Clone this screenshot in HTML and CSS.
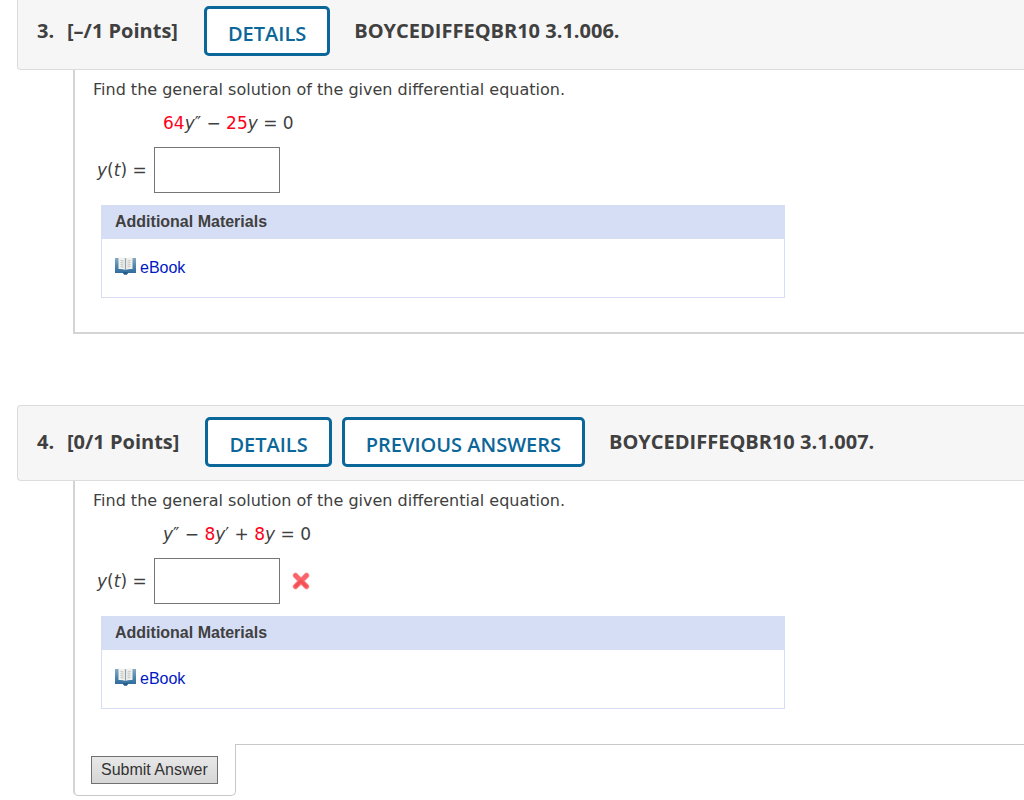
FILE: index.html
```html
<!DOCTYPE html>
<html lang="en">
<head>
  <meta charset="UTF-8">
  <meta name="viewport" content="width=device-width, initial-scale=1.0">
  <title>Assignment</title>
  <link rel="stylesheet" href="styles.css">
</head>
<body>
  <!-- shared icons -->
  <svg width="0" height="0" class="sprite" aria-hidden="true">
    <defs>
      <linearGradient id="cover" x1="0" y1="0" x2="0" y2="1">
        <stop offset="0" stop-color="#86abc6"/>
        <stop offset=".5" stop-color="#4d86b0"/>
        <stop offset="1" stop-color="#2a6698"/>
      </linearGradient>
    </defs>
    <symbol id="book" viewBox="0 0 21 18">
      <path d="M0 1h21v15h-8l-1 1.500h-3L8 16H0z" fill="url(#cover)"/>
      <path d="M3.500 .500Q7 0 10.500 1.500 14 0 17.500 .500V12q-4-.500-7 1Q7 11.500 3.500 12z" fill="#f1f1ee"/>
      <path d="M10.500 1.500v11.500" stroke="#8ea3b1" stroke-width="1.200"/>
      <path d="M5.500 3.500l3 .500M5.500 5.500l3 .500M5.500 7.500l3 .500M5.500 9.500l3 .500M12.500 4l3-.500M12.500 6l3-.500M12.500 8l3-.500M12.500 10l3-.500" stroke="#c2c2be" stroke-width="1"/>
      <path d="M8 15h5l-1 2.500H9z" fill="#245b88"/>
    </symbol>
    <symbol id="wrong" viewBox="0 0 18 18">
      <path d="M3.500 3.500l11 11M14.500 3.500l-11 11" stroke="#f9a0a0" stroke-width="5.500" stroke-linecap="round"/>
      <path d="M3.500 3.500l11 11M14.500 3.500l-11 11" stroke="#fa6569" stroke-width="4.500" stroke-linecap="round"/>
      <path d="M9 9l5 5M9 9l-5 5" stroke="#f64e53" stroke-width="3" stroke-linecap="round"/>
    </symbol>
  </svg>

  <main class="assignment">
    <section class="question">
      <header class="question-header">
        <span class="number">3.</span>
        <span class="points">[–/1 Points]</span>
        <div class="actions">
          <button type="button" class="btn">DETAILS</button>
        </div>
        <span class="source">BOYCEDIFFEQBR10 3.1.006.</span>
      </header>
      <div class="question-body closed">
        <p class="prompt">Find the general solution of the given differential equation.</p>
        <p class="equation"><span class="rand">64</span><i>y</i>″ − <span class="rand">25</span><i>y</i> = 0</p>
        <div class="answer">
          <label for="answer3"><i>y</i>(<i>t</i>) =</label>
          <input type="text" id="answer3">
        </div>
        <div class="materials">
          <h3>Additional Materials</h3>
          <div class="materials-list">
            <a href="#"><svg class="book"><use href="#book"/></svg>eBook</a>
          </div>
        </div>
      </div>
    </section>

    <section class="question">
      <header class="question-header">
        <span class="number">4.</span>
        <span class="points">[0/1 Points]</span>
        <div class="actions">
          <button type="button" class="btn">DETAILS</button>
          <button type="button" class="btn">PREVIOUS ANSWERS</button>
        </div>
        <span class="source">BOYCEDIFFEQBR10 3.1.007.</span>
      </header>
      <div class="question-body">
        <p class="prompt">Find the general solution of the given differential equation.</p>
        <p class="equation"><i>y</i>″ − <span class="rand">8</span><i>y</i>′ + <span class="rand">8</span><i>y</i> = 0</p>
        <div class="answer">
          <label for="answer4"><i>y</i>(<i>t</i>) =</label>
          <input type="text" id="answer4">
          <svg class="mark" role="img" aria-label="Incorrect"><use href="#wrong"/></svg>
        </div>
        <div class="materials">
          <h3>Additional Materials</h3>
          <div class="materials-list">
            <a href="#"><svg class="book"><use href="#book"/></svg>eBook</a>
          </div>
        </div>
      </div>
      <div class="question-footer">
        <div class="submit-tab">
          <button type="submit" class="submit">Submit Answer</button>
        </div>
        <div class="footer-line"></div>
      </div>
    </section>
  </main>
</body>
</html>
```
FILE: styles.css
```css
* {
  box-sizing: border-box;
}
body {
  margin: 0;
  background: #fff;
  color: #404040;
  font-family: Verdana, "DejaVu Sans", sans-serif;
  font-size: 16px;
  line-height: 20px;
}
.sprite {
  display: block;
}
.assignment {
  margin-top: -6px;
  padding-left: 17px;
}
.question {
  margin-bottom: 71px;
}
.question:last-child {
  margin-bottom: 0;
}

/* header bar */
.question-header {
  display: flex;
  align-items: center;
  height: 76px;
  padding: 0 0 2px 19px;
  background: #f6f6f6;
  border: 1px solid #dcdcdc;
  border-right: none;
  border-radius: 4px 0 0 4px;
  font-family: "Open Sans", sans-serif;
  font-size: 20px;
  font-weight: 700;
  white-space: nowrap;
}
.number {
  width: 30px;
}
.actions {
  display: flex;
  gap: 10px;
  margin: 0 24px 0 26px;
}
.btn {
  height: 50px;
  padding: 4px 21px 0;
  background: #fff;
  border: 3px solid #0b6699;
  border-radius: 5px;
  color: #0b6699;
  font-family: inherit;
  font-size: 20px;
  font-weight: 600;
  cursor: pointer;
}

/* question content */
.question-body {
  margin-left: 56px;
  padding: 10px 20px 35px 18px;
  border-left: 2px solid #d4d4d4;
}
.question-body.closed {
  padding-bottom: 34px;
  border-bottom: 2px solid #d4d4d4;
}
.prompt {
  margin: 0;
}
.equation {
  margin: 13px 0 14px 70px;
  font-size: 17px;
}
.rand {
  color: #ff0019;
}
.answer {
  display: flex;
  align-items: center;
  gap: 7px;
  padding-left: 4px;
  font-size: 17px;
}
.answer input {
  width: 126px;
  height: 46px;
  padding: 4px 8px;
  border: 1px solid #767676;
  font: inherit;
}
.mark {
  width: 18px;
  height: 18px;
  margin-left: 5px;
}
.materials {
  max-width: 684px;
  margin: 12px 0 0 8px;
  border: 1px solid #d6def5;
  font-family: Arial, "Liberation Sans", sans-serif;
}
.materials h3 {
  margin: 0;
  padding: 6px 13px 7px;
  background: #d6def5;
  font-size: 16px;
  line-height: 20px;
}
.materials-list {
  padding: 17px 13px;
}
.materials-list a {
  display: flex;
  align-items: flex-start;
  gap: 4px;
  color: #0018c4;
  line-height: 24px;
  text-decoration: none;
}
.book {
  width: 21px;
  height: 18px;
  margin-top: 1px;
}

/* submit tab hanging below the question */
.question-footer {
  display: flex;
  margin-left: 56px;
}
.submit-tab {
  padding: 12px 17px 11px 16px;
  border: 1px solid #c8c8c8;
  border-left: 2px solid #d4d4d4;
  border-top: none;
  border-radius: 0 0 5px 5px;
}
.footer-line {
  flex: 1;
  border-top: 1px solid #c8c8c8;
}
.submit {
  display: block;
  height: 28px;
  padding: 0 9px;
  background: linear-gradient(#e8e8e8, #d6d6d6);
  border: 1px solid #707070;
  color: #333;
  font-family: Arial, "Liberation Sans", sans-serif;
  font-size: 16px;
  cursor: pointer;
}
```
